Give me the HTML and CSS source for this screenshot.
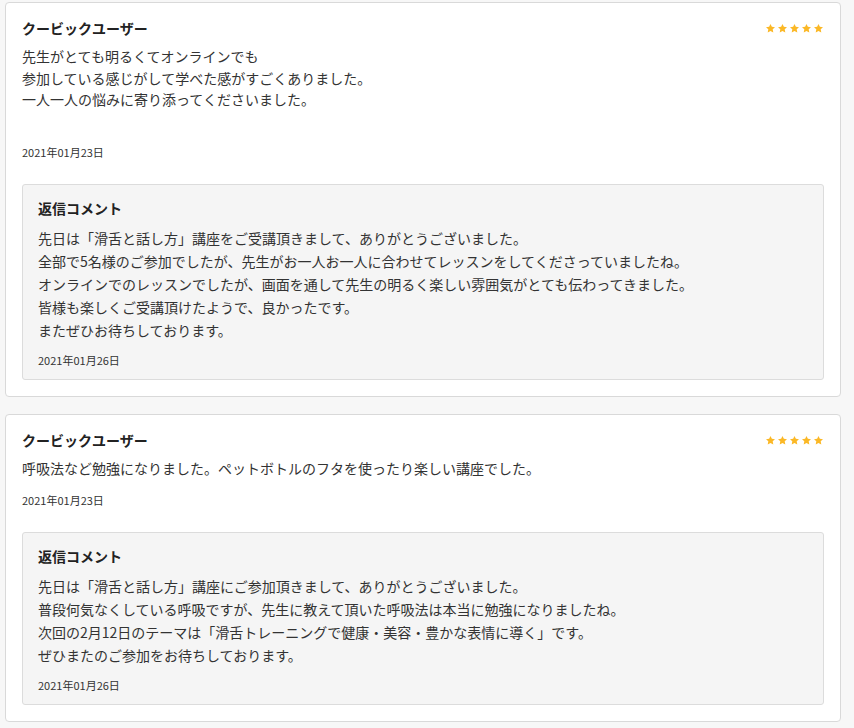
FILE: index.html
```html
<!DOCTYPE html>
<html lang="ja">
<head>
<meta charset="utf-8">
<title>レビュー</title>
<link rel="stylesheet" href="styles.css">
</head>
<body>
<div class="reviews">
  <div class="card">
    <div class="head">
      <div class="name">クービックユーザー</div>
      <div class="stars">
        <svg viewBox="0 0 24 24"><path d="M12 2l3 6.4 6.8.8-5 4.7 1.3 6.8L12 17.3l-6.1 3.4 1.3-6.8-5-4.7 6.8-.8z"/></svg>
        <svg viewBox="0 0 24 24"><path d="M12 2l3 6.4 6.8.8-5 4.7 1.3 6.8L12 17.3l-6.1 3.4 1.3-6.8-5-4.7 6.8-.8z"/></svg>
        <svg viewBox="0 0 24 24"><path d="M12 2l3 6.4 6.8.8-5 4.7 1.3 6.8L12 17.3l-6.1 3.4 1.3-6.8-5-4.7 6.8-.8z"/></svg>
        <svg viewBox="0 0 24 24"><path d="M12 2l3 6.4 6.8.8-5 4.7 1.3 6.8L12 17.3l-6.1 3.4 1.3-6.8-5-4.7 6.8-.8z"/></svg>
        <svg viewBox="0 0 24 24"><path d="M12 2l3 6.4 6.8.8-5 4.7 1.3 6.8L12 17.3l-6.1 3.4 1.3-6.8-5-4.7 6.8-.8z"/></svg>
      </div>
    </div>
    <p class="body">先生がとても明るくてオンラインでも<br>参加している感じがして学べた感がすごくありました。<br>一人一人の悩みに寄り添ってくださいました。<br>&nbsp;</p>
    <div class="date">2021年01月23日</div>
    <div class="reply">
      <div class="reply-title">返信コメント</div>
      <p class="reply-body">先日は「滑舌と話し方」講座をご受講頂きまして、ありがとうございました。<br>全部で5名様のご参加でしたが、先生がお一人お一人に合わせてレッスンをしてくださっていましたね。<br>オンラインでのレッスンでしたが、画面を通して先生の明るく楽しい雰囲気がとても伝わってきました。<br>皆様も楽しくご受講頂けたようで、良かったです。<br>またぜひお待ちしております。</p>
      <div class="date reply-date">2021年01月26日</div>
    </div>
  </div>

  <div class="card">
    <div class="head">
      <div class="name">クービックユーザー</div>
      <div class="stars">
        <svg viewBox="0 0 24 24"><path d="M12 2l3 6.4 6.8.8-5 4.7 1.3 6.8L12 17.3l-6.1 3.4 1.3-6.8-5-4.7 6.8-.8z"/></svg>
        <svg viewBox="0 0 24 24"><path d="M12 2l3 6.4 6.8.8-5 4.7 1.3 6.8L12 17.3l-6.1 3.4 1.3-6.8-5-4.7 6.8-.8z"/></svg>
        <svg viewBox="0 0 24 24"><path d="M12 2l3 6.4 6.8.8-5 4.7 1.3 6.8L12 17.3l-6.1 3.4 1.3-6.8-5-4.7 6.8-.8z"/></svg>
        <svg viewBox="0 0 24 24"><path d="M12 2l3 6.4 6.8.8-5 4.7 1.3 6.8L12 17.3l-6.1 3.4 1.3-6.8-5-4.7 6.8-.8z"/></svg>
        <svg viewBox="0 0 24 24"><path d="M12 2l3 6.4 6.8.8-5 4.7 1.3 6.8L12 17.3l-6.1 3.4 1.3-6.8-5-4.7 6.8-.8z"/></svg>
      </div>
    </div>
    <p class="body">呼吸法など勉強になりました。ペットボトルのフタを使ったり楽しい講座でした。</p>
    <div class="date">2021年01月23日</div>
    <div class="reply">
      <div class="reply-title">返信コメント</div>
      <p class="reply-body">先日は「滑舌と話し方」講座にご参加頂きまして、ありがとうございました。<br>普段何気なくしている呼吸ですが、先生に教えて頂いた呼吸法は本当に勉強になりましたね。<br>次回の2月12日のテーマは「滑舌トレーニングで健康・美容・豊かな表情に導く」です。<br>ぜひまたのご参加をお待ちしております。</p>
      <div class="date reply-date">2021年01月26日</div>
    </div>
  </div>
</div>
</body>
</html>
```

FILE: styles.css
```css
html, body {
  margin: 0;
  padding: 0;
  background: #f7f7f7;
}
body {
  font-family: "Noto Sans CJK JP", "Noto Sans", sans-serif;
  color: #333;
}
.reviews {
  display: flex;
  flex-direction: column;
  gap: 17px;
  padding: 2px 13px 0 5px;
}
.card {
  background: #fff;
  border: 1px solid #d9d9d9;
  border-radius: 4px;
  padding: 15px 16px 16px 16px;
}
.head {
  display: flex;
  justify-content: space-between;
  align-items: flex-start;
  margin-bottom: 8px;
}
.name {
  font-size: 14px;
  line-height: 20px;
  font-weight: bold;
  color: #222;
}
.stars {
  display: flex;
  gap: 1px;
  margin-top: 5px;
}
.stars svg {
  width: 11px;
  height: 11px;
  fill: #fbb826;
}
.body {
  margin: 0;
  font-size: 14px;
  line-height: 21.5px;
  color: #333;
}
.date {
  margin-top: 12px;
  font-size: 11px;
  line-height: 16px;
  color: #333;
}
.reply {
  margin-top: 24px;
  background: #f5f5f5;
  border: 1px solid #dcdcdc;
  border-radius: 3px;
  padding: 13px 15px 11px 15px;
}
.reply-title {
  font-size: 14px;
  line-height: 20px;
  font-weight: bold;
  color: #222;
  margin-bottom: 9px;
}
.reply-body {
  margin: 0;
  font-size: 14px;
  line-height: 23px;
  color: #333;
}
.reply-date {
  margin-top: 10px;
}
```
